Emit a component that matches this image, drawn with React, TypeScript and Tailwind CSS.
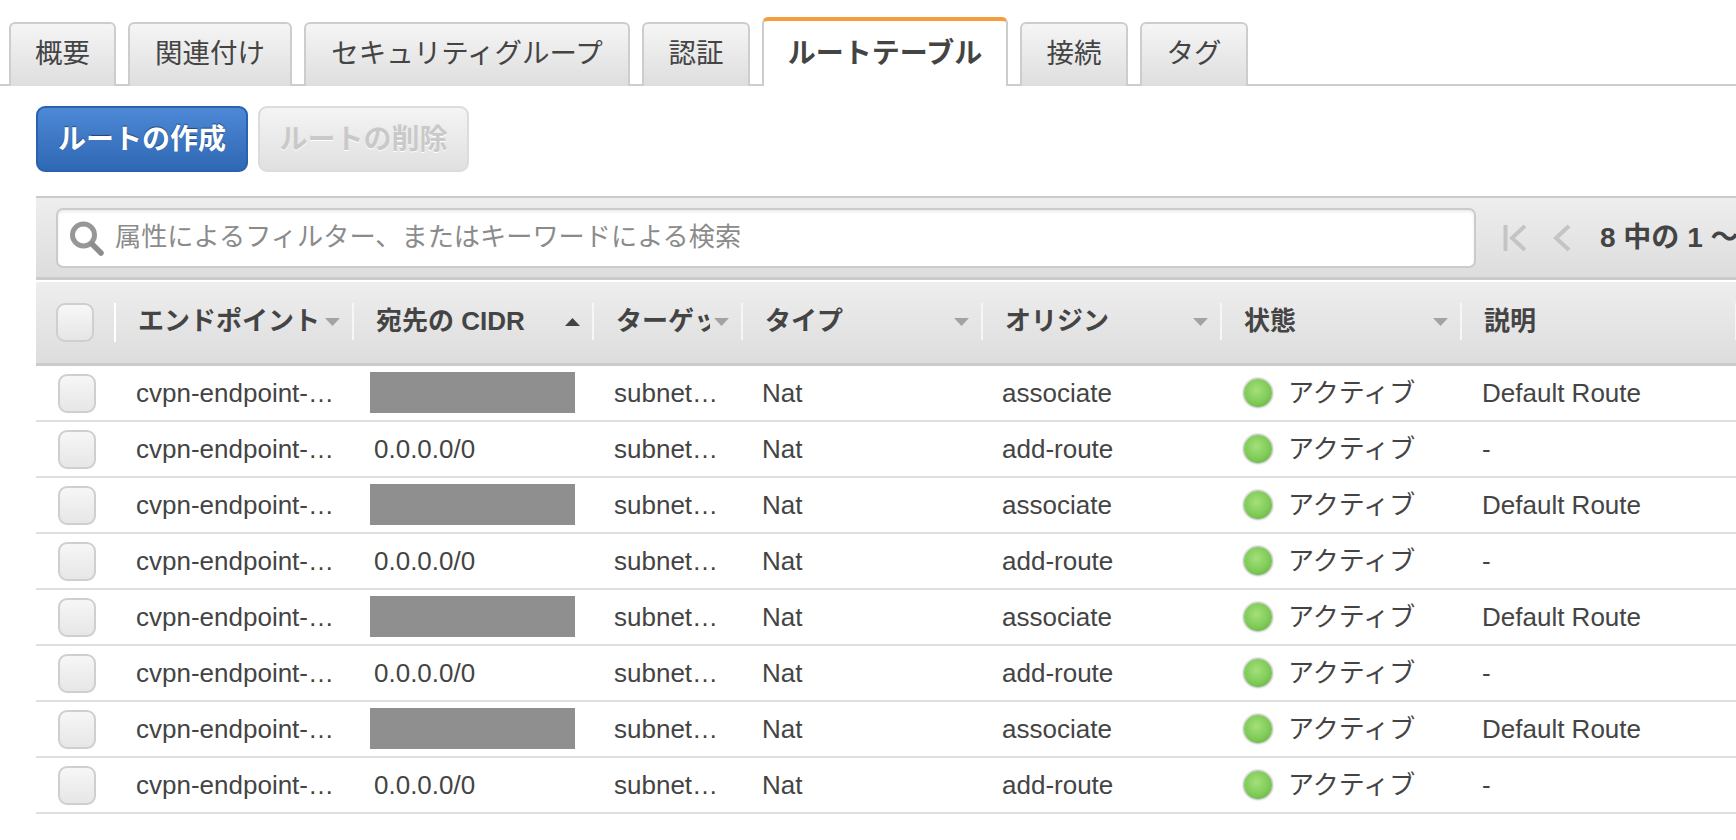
import React from "react";

const font = "[font-family:'Liberation_Sans','Noto_Sans_CJK_JP',sans-serif]";

const tabs = [
  { label: "概要", w: "w-[107px]" },
  { label: "関連付け", w: "w-[164px]" },
  { label: "セキュリティグループ", w: "w-[326px]" },
  { label: "認証", w: "w-[108px]" },
  { label: "ルートテーブル", w: "w-[246px]", active: true },
  { label: "接続", w: "w-[108px]" },
  { label: "タグ", w: "w-[108px]" },
];

const columns = [
  { label: "エンドポイント", w: "w-[238px]", arrow: "down" },
  { label: "宛先の CIDR", w: "w-[240px]", arrow: "up" },
  { label: "ターゲット", w: "w-[149px]", arrow: "down", clip: true },
  { label: "タイプ", w: "w-[240px]", arrow: "down" },
  { label: "オリジン", w: "w-[239px]", arrow: "down" },
  { label: "状態", w: "w-[240px]", arrow: "down" },
  { label: "説明", w: "w-[275px]", arrow: "" },
];

const rows = [0, 1, 2, 3, 4, 5, 6, 7].map((i) => i % 2 === 0);

function Checkbox() {
  return (
    <div className="w-[38px] h-[39px] rounded-[9px] border-2 border-[#cfcfcf] bg-gradient-to-b from-[#f7f7f7] to-[#e6e6e6]" />
  );
}

function Arrow({ dir }: { dir: string }) {
  return (
    <svg width="15" height="8" viewBox="0 0 15 8" className="shrink-0">
      {dir === "up" ? (
        <path d="M7.5 0 L15 8 L0 8 Z" fill="#444444" />
      ) : (
        <path d="M0 0 L15 0 L7.5 8 Z" fill="#a3a3a3" />
      )}
    </svg>
  );
}

function Dot() {
  return (
    <span className="w-[28px] h-[28px] rounded-full shrink-0 bg-[radial-gradient(circle_at_45%_40%,#a4e07a_0%,#7fcb58_55%,#5fa83c_100%)] shadow-[0_0_2px_1px_rgba(0,0,0,0.3)]" />
  );
}

export default function App() {
  return (
    <div className={`w-[1736px] h-[840px] overflow-hidden bg-white text-[#444444] ${font}`}>
      <div className="h-[86px] flex items-end gap-[12px] pl-[9px] border-b-2 border-[#cdcdcd]">
        {tabs.map((t) => (
          <div
            key={t.label}
            className={`${t.w} shrink-0 -mb-[2px] flex items-center justify-center rounded-t-[6px] ${
              t.active
                ? "h-[69px] bg-white border-x-2 border-[#cdcdcd] border-t-[4px] border-t-[#f59d3c] font-bold text-[28px]"
                : "h-[64px] border-x-2 border-t-2 border-[#cdcdcd] bg-gradient-to-b from-[#f5f5f5] to-[#dedede] pb-[2px] text-[27.5px]"
            }`}
          >
            {t.label}
          </div>
        ))}
      </div>

      <div className="pl-[36px]">
        <div className="flex gap-[10px] pt-[20px] h-[110px]">
          <div className="w-[212px] h-[66px] pt-[2px] rounded-[9px] border-2 border-[#2b62ad] bg-gradient-to-b from-[#4d89d7] to-[#2f68b3] text-white font-bold text-[28px] flex items-center justify-center [text-shadow:0_-1px_1px_rgba(0,0,0,0.45)]">
            ルートの作成
          </div>
          <div className="w-[211px] h-[66px] pt-[2px] rounded-[9px] border-2 border-[#dcdcdc] bg-gradient-to-b from-[#f4f4f4] to-[#e0e0e0] text-[#c9c9c9] font-bold text-[28px] flex items-center justify-center [text-shadow:0_1px_0_#ffffff]">
            ルートの削除
          </div>
        </div>

        <div className="h-[84px] border-t-2 border-b-[3px] border-[#cbcbcb] bg-gradient-to-b from-[#eeeeee] to-[#dddddd] flex items-center pl-[20px]">
          <div className="w-[1420px] h-[60px] shrink-0 rounded-[7px] border-2 border-[#cbcbcb] bg-white shadow-[inset_0_2px_3px_rgba(0,0,0,0.08)] flex items-center pl-[10px] gap-[9px]">
            <svg width="38" height="38" viewBox="0 0 38 38" className="shrink-0">
              <circle cx="15.5" cy="16" r="11" fill="none" stroke="#979797" strokeWidth="5" />
              <path d="M24 25 L33 34" stroke="#8d8d8d" strokeWidth="5.5" strokeLinecap="round" />
            </svg>
            <span className="text-[26.2px] text-[#8b8b8b] whitespace-nowrap">属性によるフィルター、またはキーワードによる検索</span>
          </div>
          <svg width="24" height="28" viewBox="0 0 24 28" className="ml-[27px] shrink-0">
            <path d="M2.5 1 V27" stroke="#c4c4c4" strokeWidth="4" />
            <path d="M22 2 L9 14 L22 26" fill="none" stroke="#c4c4c4" strokeWidth="4" />
          </svg>
          <svg width="18" height="28" viewBox="0 0 18 28" className="ml-[26px] shrink-0">
            <path d="M16 2 L3 14 L16 26" fill="none" stroke="#c4c4c4" strokeWidth="4" />
          </svg>
          <span className="ml-[29px] text-[28px] font-bold whitespace-nowrap">8 中の 1 〜</span>
        </div>

        <div className="mt-[2px] h-[84px] border-b-[3px] border-[#cbcbcb] bg-gradient-to-b from-[#eeeeee] to-[#dddddd] flex items-start pt-[21px]">
          <div className="w-[80px] shrink-0 pl-[20px] h-[39px] flex border-r-2 border-white">
            <Checkbox />
          </div>
          {columns.map((c) => (
            <div
              key={c.label}
              className={`${c.w} shrink-0 h-[37px] flex items-center justify-between pl-[22px] pr-[12px] border-r-2 border-[#f6f6f6] font-bold text-[26px] whitespace-nowrap`}
            >
              <span className={c.clip ? "w-[94px] overflow-hidden" : ""}>{c.label}</span>
              {c.arrow ? <Arrow dir={c.arrow} /> : null}
            </div>
          ))}
        </div>

        {rows.map((assoc, i) => (
          <div key={i} className="h-[56px] flex items-center border-b-2 border-[#dfdfdf] text-[26px] whitespace-nowrap">
            <div className="w-[82px] shrink-0 pl-[22px]">
              <Checkbox />
            </div>
            <div className="w-[238px] shrink-0 pl-[18px]">cvpn-endpoint-…</div>
            <div className="w-[240px] shrink-0 pl-[18px]">
              {assoc ? <div className="w-[205px] h-[41px] bg-[#8f8f8f] -ml-[4px] -mt-[1px]" /> : "0.0.0.0/0"}
            </div>
            <div className="w-[149px] shrink-0 pl-[18px]">subnet…</div>
            <div className="w-[240px] shrink-0 pl-[17px]">Nat</div>
            <div className="w-[239px] shrink-0 pl-[17px]">{assoc ? "associate" : "add-route"}</div>
            <div className="w-[240px] shrink-0 pl-[20px] flex items-center gap-[16px]">
              <Dot />
              アクティブ
            </div>
            <div className="pl-[18px]">{assoc ? "Default Route" : "-"}</div>
          </div>
        ))}
      </div>
    </div>
  );
}
